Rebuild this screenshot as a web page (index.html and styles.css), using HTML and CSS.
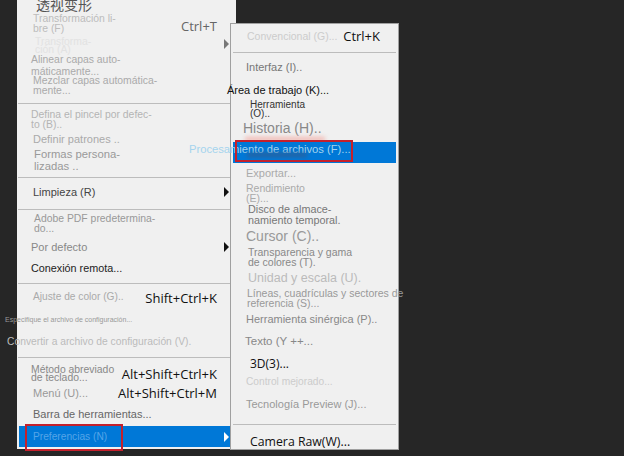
FILE: index.html
```html
<!DOCTYPE html>
<html lang="es">
<head>
    <meta charset="UTF-8">
    <meta name="viewport" content="width=device-width, initial-scale=1.0">
    <title>Preferencias</title>
    <link rel="stylesheet" href="styles.css">
</head>
<body>

<div class="menu main-menu">
    <div class="item warp">透视变形</div>
    <div class="item free"><span>Transformación li-<br>bre (F)</span><span class="keys keys-low grey-keys">Ctrl+T</span></div>
    <div class="item transform"><span>Transforma-<br>ción (A)</span><i class="arrow arrow-grey"></i></div>
    <div class="item align"><span>Alinear capas auto-<br>máticamente...</span></div>
    <div class="item blend"><span>Mezclar capas automática-<br>mente...</span></div>
    <hr class="sep sep-103">

    <div class="item brush"><span>Defina el pincel por defec-<br>to (B)..</span></div>
    <div class="item pattern">Definir patrones ..</div>
    <div class="item shapes"><span>Formas persona-<br>lizadas ..</span></div>
    <hr class="sep">

    <div class="item purge">Limpieza (R)<i class="arrow"></i></div>
    <hr class="sep">

    <div class="item pdf"><span>Adobe PDF predetermina-<br>do...</span></div>
    <div class="item preset">Por defecto<i class="arrow"></i></div>
    <div class="item remote">Conexión remota...</div>
    <hr class="sep">

    <div class="item color">Ajuste de color (G)..<span class="keys keys-low">Shift+Ctrl+K</span></div>
    <div class="item specify">Especifique el archivo de configuración...</div>
    <div class="item convert">Convertir a archivo de configuración (V).</div>
    <hr class="sep sep-357">

    <div class="item shortcuts"><span>Método abreviado<br>de teclado...</span><span class="keys">Alt+Shift+Ctrl+K</span></div>
    <div class="item menus">Menú (U)...<span class="keys">Alt+Shift+Ctrl+M</span></div>
    <div class="item toolbar">Barra de herramientas...</div>
    <div class="item prefs">Preferencias (N)<i class="arrow arrow-white"></i><b class="mark mark-prefs"></b></div>
</div>

<div class="menu sub-menu">
    <div class="item general">Convencional (G)...<span class="keys">Ctrl+K</span></div>
    <hr class="sep">
    <div class="item iface">Interfaz (I)..</div>
    <div class="item workspace">Área de trabajo (K)...</div>
    <div class="item tools"><span>Herramienta<br>(O)..</span></div>
    <div class="item history">Historia (H)..</div>
    <div class="item files">Procesamiento de archivos (F)...<b class="mark mark-files"></b></div>
    <div class="item export">Exportar...</div>
    <div class="item perf"><span>Rendimiento<br>(E)...</span></div>
    <div class="item scratch"><span>Disco de almace-<br>namiento temporal.</span></div>
    <div class="item cursor">Cursor (C)..</div>
    <div class="item gamut"><span>Transparencia y gama<br>de colores (T).</span></div>
    <div class="item units">Unidad y escala (U).</div>
    <div class="item guides"><span>Líneas, cuadrículas y sectores de<br>referencia (S)...</span></div>
    <div class="item sync">Herramienta sinérgica (P)..</div>
    <div class="item type">Texto (Y ++...</div>
    <div class="item three">3D(3)...</div>
    <div class="item enhanced">Control mejorado...</div>
    <div class="item tech">Tecnología Preview (J)...</div>
    <hr class="sep">
    <div class="item raw">Camera Raw(W)...</div>
</div>

</body>
</html>
```

FILE: styles.css
```css
body {
    margin: 0;
    height: 456px;
    overflow: hidden;
    position: relative;
    background-color: #262626;
    font-family: "Liberation Sans", Arial, sans-serif;
}

.menu {
    position: absolute;
    box-sizing: border-box;
    background-color: #f0f0f0;
    display: flex;
    flex-direction: column;
}
.main-menu {
    left: 17px;
    top: -4px;
    width: 219px;
    height: 453px;
}
.sub-menu {
    left: 230px;
    top: 23px;
    width: 169px;
    height: 427px;
    border: 1px solid #a0a0a0;
}

.item {
    display: flex;
    align-items: center;
    flex: none;
    position: relative;
    white-space: nowrap;
    padding-right: 7px;
}
.keys {
    margin-left: auto;
    margin-right: 12px;
    font-family: "Open Sans", sans-serif;
    font-size: 13px;
    color: #111;
}
.keys-low {
    margin-top: 4px;
}
.grey-keys {
    color: #666;
}
.sub-menu .keys {
    margin-right: 11px;
}
.arrow {
    margin-left: auto;
    width: 0;
    height: 0;
    border-left: 5px solid #111;
    border-top: 5px solid transparent;
    border-bottom: 5px solid transparent;
}
.arrow-grey {
    border-left-color: #777;
    margin-top: -4px;
}
.arrow-white {
    border-left-color: #fff;
}

.sep {
    flex: none;
    height: 1px;
    margin: 3px 5px 0 1px;
    border: 0;
    background-color: #bcbcbc;
}
.sep-103 {
    margin-top: 7px;
}
.sep-357 {
    margin-top: 5px;
}

.mark {
    position: absolute;
    border: 2px solid #c4202c;
    box-sizing: border-box;
}
.mark-prefs {
    left: 6px;
    top: -2px;
    width: 98px;
    height: 27px;
}
.mark-files {
    left: 2px;
    top: -2px;
    width: 118px;
    height: 22px;
}

/* main menu */
.warp { height: 16px; padding-left: 19px; font: 14px "Noto Sans CJK SC", sans-serif; color: #555; }
.free { height: 24px; padding-left: 16px; font-size: 10.4px; line-height: 10px; color: #bcbcbc; }
.transform { height: 20px; padding-left: 18px; font-size: 10.4px; line-height: 8px; color: #e2e2e2; }
.align { height: 20px; padding-left: 14px; font-size: 10.4px; line-height: 12px; color: #aaa; }
.blend { height: 20px; padding-left: 16px; font-size: 10.4px; line-height: 10px; color: #aaa; }
.brush { height: 24px; margin-top: 4px; padding-left: 14px; font-size: 10.4px; line-height: 10px; color: #b4b4b4; }
.pattern { height: 14px; padding-left: 16px; font-size: 11px; color: #aaa; }
.shapes { height: 28px; padding-left: 17px; font-size: 11.3px; line-height: 12px; color: #999; }
.purge { height: 28px; padding-left: 16px; font-size: 11px; color: #444; }
.pdf { height: 28px; padding-left: 17px; font-size: 10.4px; line-height: 10px; color: #999; }
.preset { height: 18px; padding-left: 14px; font-size: 11px; color: #888; }
.remote { height: 24px; padding-left: 14px; font-size: 10.8px; color: #222; }
.color { height: 24px; padding-left: 16px; font-size: 10.2px; color: #aaa; }
.specify { height: 22px; margin-left: -12px; padding-left: 0; font-size: 7px; color: #999; }
.convert { height: 22px; margin-left: -10px; font-size: 10.3px; color: #bbb; }
.shortcuts { height: 20px; margin-top: 6px; padding-left: 14px; font-size: 10.4px; line-height: 8px; color: #888; }
.menus { height: 18px; padding-left: 16px; font-size: 11px; color: #999; }
.toolbar { height: 24px; padding-left: 16px; font-size: 11px; color: #666; }
.prefs { height: 21px; margin: 0 5px 0 2px; padding-left: 14px; padding-right: 2px; font-size: 10.2px; color: #55a5e8; background-color: #0078d7; }

/* preferences submenu */
.general { height: 24px; padding-left: 16px; font-size: 10.5px; color: #ccc; }
.sub-menu .sep { margin: 4px 2px 0 2px; }
.iface { height: 28px; padding-left: 15px; font-size: 11px; color: #777; }
.workspace { height: 18px; margin-left: -4px; font-size: 11px; color: #111; }
.tools { height: 19px; padding-left: 19px; font-size: 10px; line-height: 9px; color: #333; }
.history { height: 20px; padding-left: 12px; font-size: 14px; color: #888; }
.history::after {
    content: "";
    position: absolute;
    left: 14px;
    top: 19px;
    width: 80px;
    height: 4px;
    background-color: #f2b6b0;
    filter: blur(2px);
}
.files { height: 21px; margin: 4px 2px 0 2px; padding-right: 0; padding-top: 1px; box-sizing: border-box; align-items: flex-start; text-indent: -44px; font-size: 11.2px; color: #a5d4ee; background-color: #0078d7; }
.files::after {
    content: "";
    position: absolute;
    left: 14px;
    top: 11px;
    width: 60px;
    height: 4px;
    background-color: #2b5f98;
    filter: blur(2px);
}
.export { height: 20px; padding-left: 15px; font-size: 11px; color: #aaa; }
.perf { height: 20px; padding-left: 15px; font-size: 10.5px; line-height: 10px; color: #aaa; }
.scratch { height: 23px; padding-left: 17px; font-size: 10.8px; line-height: 11px; color: #777; }
.cursor { height: 20px; padding-left: 15px; font-size: 14px; color: #999; }
.gamut { height: 22px; padding-left: 17px; font-size: 10.5px; line-height: 10px; color: #888; }
.units { height: 20px; padding-left: 17px; font-size: 12.5px; color: #bbb; }
.guides { height: 20px; padding-left: 16px; font-size: 10.5px; line-height: 10px; color: #999; }
.sync { height: 22px; padding-left: 15px; font-size: 11px; color: #888; }
.type { height: 22px; padding-left: 14px; font-size: 11.5px; color: #888; }
.three { height: 22px; padding-left: 19px; font: 12px "Open Sans", sans-serif; color: #111; }
.enhanced { height: 14px; padding-left: 15px; font-size: 10.2px; color: #ccc; }
.tech { height: 32px; padding-left: 15px; font-size: 11px; color: #999; }
.raw { height: 28px; padding-left: 19px; padding-top: 4px; box-sizing: border-box; font: 12.3px "Open Sans", sans-serif; color: #111; }
```
